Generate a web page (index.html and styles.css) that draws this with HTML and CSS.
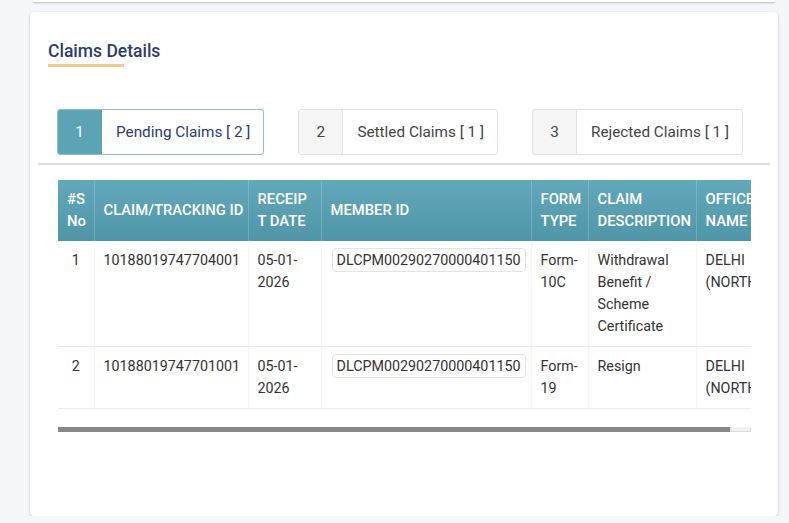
FILE: index.html
```html
<!DOCTYPE html>
<html lang="en">

<head>
    <meta charset="UTF-8">
    <meta name="viewport" content="width=device-width, initial-scale=1.0">
    <title>Claims Details</title>
    <link rel="stylesheet" href="styles.css">
</head>

<body>
    <div class="top-card"></div>

    <div class="card">
        <div class="card-title">
            <h3>Claims Details</h3>
            <span class="title-line"></span>
        </div>

        <div class="tabs">
            <div class="tab active">
                <span class="tab-num">1</span>
                <span class="tab-label">Pending Claims [ 2 ]</span>
            </div>
            <div class="tab">
                <span class="tab-num">2</span>
                <span class="tab-label">Settled Claims [ 1 ]</span>
            </div>
            <div class="tab">
                <span class="tab-num">3</span>
                <span class="tab-label">Rejected Claims [ 1 ]</span>
            </div>
        </div>

        <hr class="divider">

        <div class="table-wrap">
            <table class="claims-table">
                <colgroup>
                    <col class="c-sno">
                    <col class="c-id">
                    <col class="c-date">
                    <col class="c-member">
                    <col class="c-form">
                    <col class="c-desc">
                    <col class="c-office">
                </colgroup>
                <thead>
                    <tr>
                        <th>#S No</th>
                        <th class="nowrap">CLAIM/TRACKING ID</th>
                        <th>RECEIP T DATE</th>
                        <th class="nowrap">MEMBER ID</th>
                        <th>FORM TYPE</th>
                        <th>CLAIM DESCRIPTION</th>
                        <th>OFFICE NAME</th>
                    </tr>
                </thead>
                <tbody>
                    <tr>
                        <td class="center">1</td>
                        <td>10188019747704001</td>
                        <td>05-01-<br>2026</td>
                        <td><span class="member-box">DLCPM00290270000401150</span></td>
                        <td>Form-<br>10C</td>
                        <td>Withdrawal Benefit / Scheme Certificate</td>
                        <td>DELHI (NORTH)</td>
                    </tr>
                    <tr>
                        <td class="center">2</td>
                        <td>10188019747701001</td>
                        <td>05-01-<br>2026</td>
                        <td><span class="member-box">DLCPM00290270000401150</span></td>
                        <td>Form-<br>19</td>
                        <td>Resign</td>
                        <td>DELHI (NORTH)</td>
                    </tr>
                </tbody>
            </table>
        </div>

        <div class="scrollbar">
            <span class="scroll-thumb"></span>
            <span class="scroll-end"></span>
        </div>
    </div>
</body>

</html>
```

FILE: styles.css
```css
body {
    font-family: Roboto, 'Liberation Sans', sans-serif;
    background-color: #f4f6fa;
    margin: 0;
    color: #333;
}

.top-card {
    height: 2px;
    width: 742px;
    margin-left: 33px;
    background-color: #fff;
    box-shadow: 0 1px 2px rgba(0, 0, 0, 0.25);
}

.card {
    background-color: #fff;
    width: 748px;
    height: 504px;
    margin: 10px 0 0 30px;
    border-radius: 4px;
    box-shadow: 0 1px 3px rgba(0, 0, 0, 0.2);
    padding: 28px 8px 0;
    box-sizing: border-box;
}

.card-title {
    padding-left: 10px;
}

.card-title h3 {
    margin: 0;
    font-size: 17.5px;
    line-height: 22px;
    font-weight: 500;
    color: #2c3c70;
}

.title-line {
    display: block;
    width: 76px;
    height: 3px;
    margin-top: 2px;
    background-color: #f0c990;
}

.tabs {
    display: flex;
    gap: 34px;
    margin-top: 42px;
    padding-left: 19px;
}

.tab {
    display: flex;
    height: 46px;
    border: 1px solid #e2e2e2;
    border-radius: 3px;
    box-sizing: border-box;
    font-size: 15.3px;
    color: #444;
    overflow: hidden;
}

.tab-num {
    width: 43px;
    display: flex;
    align-items: center;
    justify-content: center;
    background-color: #f5f5f5;
    border-right: 1px solid #e2e2e2;
}

.tab-label {
    display: flex;
    align-items: center;
    padding: 0 13px 0 14px;
}

.tab.active {
    border-color: #8fbfcb;
    color: #2c3c70;
}

.tab.active .tab-num {
    background-color: #5ba3b5;
    border-right-color: #5ba3b5;
    color: #fff;
}

.divider {
    border: none;
    height: 2px;
    background-color: #dedede;
    margin: 8px 0 0;
}

.table-wrap {
    width: 693px;
    margin: 15px 0 0 20px;
    overflow: hidden;
}

.claims-table {
    table-layout: fixed;
    border-collapse: collapse;
    width: 718px;
    font-size: 14.3px;
}

.c-sno { width: 36px; }
.c-id { width: 154px; }
.c-date { width: 73px; }
.c-member { width: 210px; }
.c-form { width: 57px; }
.c-desc { width: 108px; }
.c-office { width: 80px; }

.claims-table th {
    background: linear-gradient(#63a8ba, #4f95a8);
    color: #fff;
    font-size: 14.8px;
    font-weight: 500;
    text-align: left;
    line-height: 22px;
    padding: 8px 8px 9px 9px;
    border-right: 1px solid rgba(255, 255, 255, 0.18);
}

.claims-table th.nowrap {
    white-space: nowrap;
}

.claims-table td {
    vertical-align: top;
    line-height: 22px;
    padding: 8px 9px 9px;
    border-bottom: 1px solid #ececec;
    border-right: 1px solid #f6f6f6;
}

.claims-table td.center {
    text-align: center;
}

.member-box {
    display: inline-block;
    margin: -1px 0 0 1px;
    padding: 0 4px;
    line-height: 22px;
    border: 1px solid #e3e3e3;
    border-radius: 4px;
}

.scrollbar {
    display: flex;
    width: 693px;
    height: 5px;
    margin: 18px 0 0 20px;
}

.scroll-thumb {
    flex: 1;
    background-color: #888;
}

.scroll-end {
    width: 19px;
    background-color: #f2f2f2;
    border: 1px solid #ddd;
    border-top: none;
}
```
